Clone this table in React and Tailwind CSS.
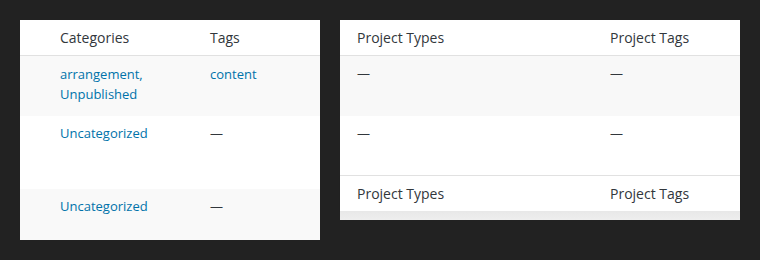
const font = { fontFamily: '"Open Sans", "Liberation Sans", sans-serif' }

function Dash() {
  return <span className="text-[#32373c]">—</span>
}

function Link({ children }) {
  return <a href="#" className="text-[#0073aa]">{children}</a>
}

export default function App() {
  return (
    <div
      className="w-[760px] h-[260px] bg-[#222222] flex items-start gap-5 p-5 text-[13px] leading-[19.5px]"
      style={font}
    >
      {/* posts list: categories & tags */}
      <div className="w-[300px] h-[220px] bg-white flex flex-col overflow-hidden">
        <div className="h-9 flex items-center border-b border-[#e1e1e1] text-[#32373c] text-[14px] pl-10 shrink-0">
          <div className="w-[150px]">Categories</div>
          <div>Tags</div>
        </div>
        <div className="h-[60px] bg-[#f9f9f9] flex pl-10 pt-[9px] shrink-0">
          <div className="w-[150px] text-[#0073aa]">
            <Link>arrangement</Link>,
            <br />
            <Link>Unpublished</Link>
          </div>
          <div>
            <Link>content</Link>
          </div>
        </div>
        <div className="h-[73px] bg-white flex pl-10 pt-2 shrink-0">
          <div className="w-[150px]">
            <Link>Uncategorized</Link>
          </div>
          <div>
            <Dash />
          </div>
        </div>
        <div className="flex-1 bg-[#f9f9f9] flex pl-10 pt-2">
          <div className="w-[150px]">
            <Link>Uncategorized</Link>
          </div>
          <div>
            <Dash />
          </div>
        </div>
      </div>

      {/* projects list */}
      <div className="w-[400px] h-[200px] bg-[#eeeeee] flex flex-col">
        <div className="h-9 bg-white flex items-center border-b border-[#e1e1e1] text-[#32373c] text-[14px] pl-[17px] shrink-0">
          <div className="w-[253px]">Project Types</div>
          <div>Project Tags</div>
        </div>
        <div className="h-[60px] bg-[#f8f8f8] flex pl-[17px] pt-2 shrink-0">
          <div className="w-[253px]"><Dash /></div>
          <div><Dash /></div>
        </div>
        <div className="h-[59px] bg-white flex pl-[17px] pt-2 shrink-0">
          <div className="w-[253px]"><Dash /></div>
          <div><Dash /></div>
        </div>
        <div className="h-9 bg-white flex items-center border-t border-[#e1e1e1] text-[#32373c] text-[14px] pl-[17px] shrink-0 shadow-[0_1px_1px_rgba(0,0,0,0.06)]">
          <div className="w-[253px]">Project Types</div>
          <div>Project Tags</div>
        </div>
        <div className="flex-1 bg-gradient-to-b from-[#e8e8e8] to-[#eeeeee]" />
      </div>
    </div>
  )
}
